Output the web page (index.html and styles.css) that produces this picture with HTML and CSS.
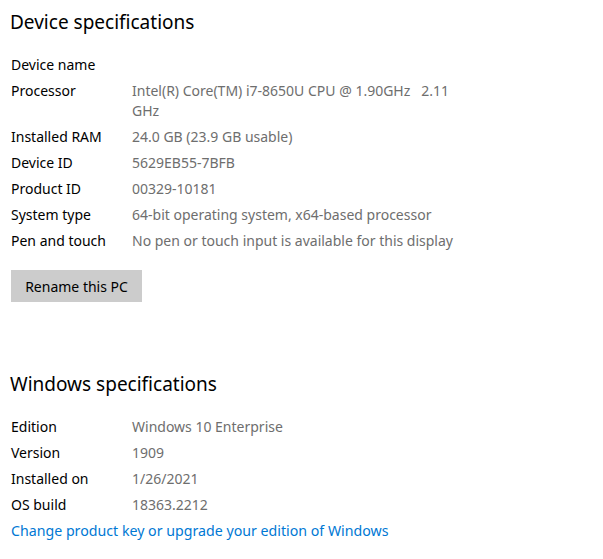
FILE: index.html
```html
<!DOCTYPE html>
<html>
<head>
<meta charset="utf-8">
<link rel="stylesheet" href="styles.css">
</head>
<body>
<div class="page">
  <h2 class="heading">Device specifications</h2>
  <div class="specs">
    <div class="row"><div class="label">Device name</div><div class="value"></div></div>
    <div class="row"><div class="label">Processor</div><div class="value">Intel(R) Core(TM) i7-8650U CPU @ 1.90GHz&nbsp;&nbsp;&nbsp;2.11 GHz</div></div>
    <div class="row"><div class="label">Installed RAM</div><div class="value">24.0 GB (23.9 GB usable)</div></div>
    <div class="row"><div class="label">Device ID</div><div class="value">5629EB55-7BFB</div></div>
    <div class="row"><div class="label">Product ID</div><div class="value">00329-10181</div></div>
    <div class="row"><div class="label">System type</div><div class="value">64-bit operating system, x64-based processor</div></div>
    <div class="row"><div class="label">Pen and touch</div><div class="value">No pen or touch input is available for this display</div></div>
  </div>
  <button class="btn">Rename this PC</button>
  <h2 class="heading heading-second">Windows specifications</h2>
  <div class="specs">
    <div class="row"><div class="label">Edition</div><div class="value">Windows 10 Enterprise</div></div>
    <div class="row"><div class="label">Version</div><div class="value">1909</div></div>
    <div class="row"><div class="label">Installed on</div><div class="value">1/26/2021</div></div>
    <div class="row"><div class="label">OS build</div><div class="value">18363.2212</div></div>
    <a class="link" href="#">Change product key or upgrade your edition of Windows</a>
  </div>
</div>
</body>
</html>
```

FILE: styles.css
```css
html, body {
  margin: 0;
  padding: 0;
  background: #ffffff;
}
body {
  font-family: "Segoe UI", "Noto Sans", "Open Sans", sans-serif;
  color: #000000;
}
.page {
  padding: 8px 0 0 11px;
  display: flex;
  flex-direction: column;
  align-items: flex-start;
}
.heading {
  margin: 0 0 19px -1px;
  font-size: 19px;
  font-weight: 400;
  line-height: 28px;
}
.heading-second {
  margin-top: 68px;
  margin-bottom: 19px;
}
.specs {
  display: flex;
  flex-direction: column;
  gap: 6px;
}
.row {
  display: grid;
  grid-template-columns: 121px 335px;
  font-size: 14px;
  line-height: 20px;
  min-height: 20px;
}
.label {
  color: #000000;
}
.value {
  color: #6e6e6e;
}
.btn {
  margin-top: 19px;
  height: 32px;
  width: 131px;
  border: none;
  background: #cccccc;
  font-family: inherit;
  font-size: 14px;
  color: #000000;
  padding: 0;
}
.link {
  font-size: 14.2px;
  line-height: 20px;
  color: #0078d4;
  text-decoration: none;
}
```
